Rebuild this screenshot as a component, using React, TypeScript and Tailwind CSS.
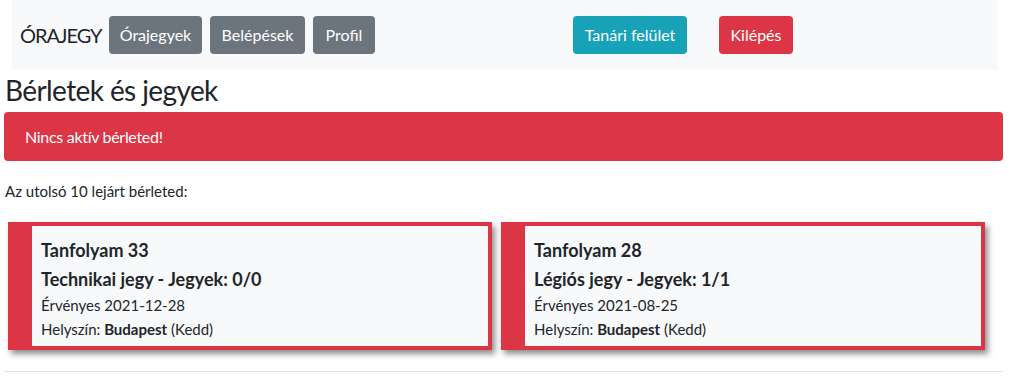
const font = { fontFamily: 'Lato, "Noto Sans", sans-serif' };

const passes = [
  { id: 33, kind: 'Technikai jegy', used: '0/0', valid: '2021-12-28', place: 'Budapest', day: 'Kedd' },
  { id: 28, kind: 'Légiós jegy', used: '1/1', valid: '2021-08-25', place: 'Budapest', day: 'Kedd' },
];

const PassCard = ({ p }: { p: (typeof passes)[number] }) => (
  <div className="w-[484px] h-[128px] bg-[#dc3545] pl-[24px] pr-[4px] py-[4px] shadow-[3px_4px_6px_rgba(0,0,0,0.45)]">
    <div className="h-full bg-[#f8f9fa] pl-[9px] pt-[13px] text-[#212529]">
      <div className="text-[18px] font-bold leading-[22px]">Tanfolyam {p.id}</div>
      <div className="text-[18px] font-bold leading-[22px] mt-[7px]">
        {p.kind} - Jegyek: {p.used}
      </div>
      <div className="text-[15px] leading-[20px] mt-[5px]">Érvényes {p.valid}</div>
      <div className="text-[15px] leading-[20px] mt-[4px]">
        Helyszín: <b>{p.place}</b> ({p.day})
      </div>
    </div>
  </div>
);

export default function App() {
  return (
    <div className="w-[1012px] h-[388px] bg-white text-[#212529]" style={font}>
      <nav className="ml-[12px] w-[985px] h-[70px] bg-[#f8f9fa] flex items-center pl-[8px]">
        <span className="text-[20px] w-[89px] tracking-[-1px]">ÓRAJEGY</span>
        <div className="flex gap-[8px]">
          <button className="w-[93px] h-[38px] rounded bg-[#6c757d] text-white text-[16px]">Órajegyek</button>
          <button className="w-[95px] h-[38px] rounded bg-[#6c757d] text-white text-[16px]">Belépések</button>
          <button className="w-[62px] h-[38px] rounded bg-[#6c757d] text-white text-[16px]">Profil</button>
        </div>
        <button className="ml-[198px] w-[114px] h-[38px] rounded bg-[#17a2b8] text-white text-[16px]">Tanári felület</button>
        <button className="ml-[32px] w-[74px] h-[38px] rounded bg-[#dc3545] text-white text-[16px]">Kilépés</button>
      </nav>
      <h3 className="ml-[5px] mt-[3px] text-[28px] leading-[34px] tracking-[-0.6px]">Bérletek és jegyek</h3>
      <div className="ml-[4px] mt-[5px] w-[999px] h-[49px] rounded bg-[#dc3545] text-white text-[16px] tracking-[-0.3px] flex items-center px-[21px]">
        Nincs aktív bérleted!
      </div>
      <p className="ml-[5px] mt-[20px] text-[15px] leading-[20px]">Az utolsó 10 lejárt bérleted:</p>
      <div className="flex gap-[9px] ml-[8px] mt-[21px]">
        {passes.map((p) => (
          <PassCard key={p.id} p={p} />
        ))}
      </div>
      <hr className="ml-[4px] mt-[21px] w-[999px] border-t border-[#e5e5e5]" />
    </div>
  );
}
